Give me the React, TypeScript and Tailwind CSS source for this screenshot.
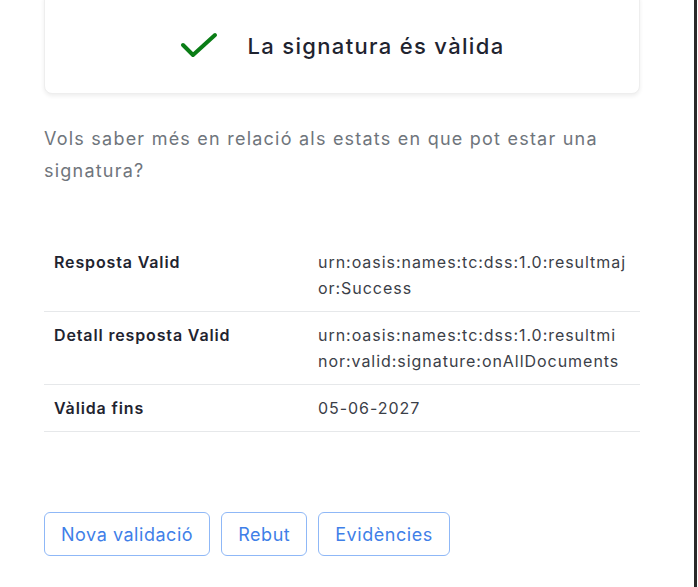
import React from "react";

type Row = { label: string; value: string[] };

// values wrap mid-word in the original, so keep the lines as shown
const rows: Row[] = [
  { label: "Resposta Valid", value: ["urn:oasis:names:tc:dss:1.0:resultmaj", "or:Success"] },
  {
    label: "Detall resposta Valid",
    value: ["urn:oasis:names:tc:dss:1.0:resultmi", "nor:valid:signature:onAllDocuments"],
  },
  { label: "Vàlida fins", value: ["05-06-2027"] },
];

const buttons = ["Nova validació", "Rebut", "Evidències"];

const CheckIcon = () => (
  <svg width="38" height="28" viewBox="0 0 38 28" fill="none">
    <path d="M3 13 L13 23 L35 3" stroke="#0a7d16" strokeWidth="4" strokeLinecap="round" strokeLinejoin="round" />
  </svg>
);

export default function App() {
  return (
    <div className="flex h-[587px] w-[698px] overflow-hidden bg-white font-['Inter',sans-serif]">
      <div className="w-[694px] px-[44px] flex flex-col">
        <div className="-mt-2 flex items-center justify-center gap-[30px] rounded-lg border border-[#eeeeee] bg-white pt-[38px] pb-[32px] shadow-[0_2px_4px_rgba(0,0,0,0.07)] w-[596px]">
          <CheckIcon />
          <span className="text-[22px] leading-[30px] font-medium tracking-[0.06em] text-[#1f2430]">
            La signatura és vàlida
          </span>
        </div>

        <p className="mt-[29px] w-[580px] text-[18px] leading-[32px] tracking-[0.068em] text-[#6f757c]">
          Vols saber més en relació als estats en que pot estar una signatura?
        </p>

        <div className="mt-[52px] w-[596px]">
          {rows.map((row) => (
            <div key={row.label} className="flex border-b border-[#e6e8ea] py-[10px]">
              <div className="w-[264px] shrink-0 px-[10px] text-[16px] leading-[26px] font-semibold tracking-[0.054em] text-[#1f2430]">
                {row.label}
              </div>
              <div className="min-w-0 flex-1 px-[10px] text-[16px] leading-[26px] tracking-[0.06em] text-[#3b4048] whitespace-nowrap">
                {row.value.map((line) => (
                  <div key={line}>{line}</div>
                ))}
              </div>
            </div>
          ))}
        </div>

        <div className="mt-[80px] flex gap-[11px]">
          {buttons.map((b) => (
            <button
              key={b}
              className="h-[44px] rounded-md border border-[#8fb8f7] bg-white px-[16px] text-[18px] tracking-[0.03em] text-[#3f7fe8]"
            >
              {b}
            </button>
          ))}
        </div>
      </div>
      <div className="w-[3px] shrink-0 bg-[#2a2a2a]" />
      <div className="flex-1 bg-white" />
    </div>
  );
}
